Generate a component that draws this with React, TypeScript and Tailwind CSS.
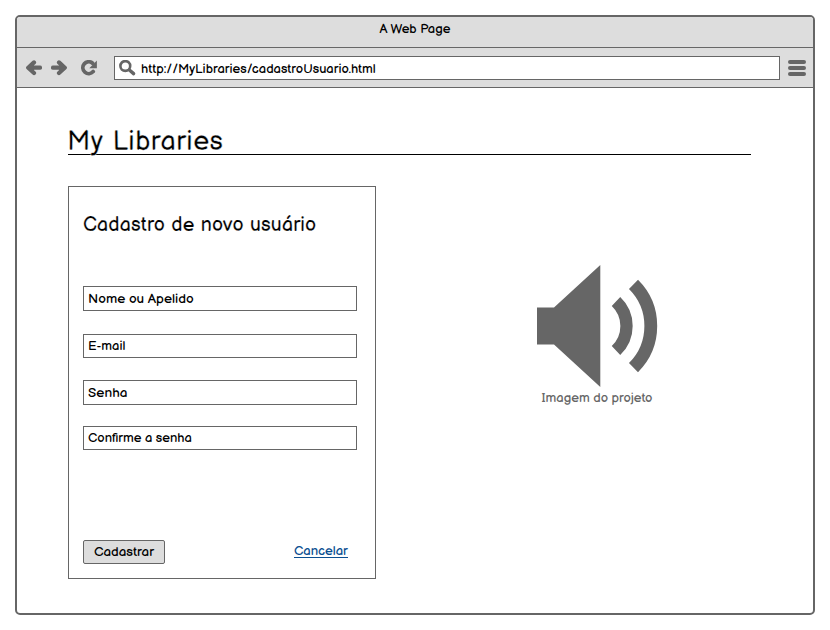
const fields = [
  { label: "Nome ou Apelido", box: "h-[25px] mb-[23px]", text: "text-[13.6px]" },
  { label: "E-mail", box: "h-6 mb-[22px]", text: "text-[13px]" },
  { label: "Senha", box: "h-[25px] mb-[21px]", text: "text-[13.6px] tracking-[0.1px]" },
  { label: "Confirme a senha", box: "h-6", text: "text-[13px]" },
];

function Speaker() {
  return (
    <svg width="122" height="124" viewBox="537 264 122 124" className="block" fill="#666666">
      <path d="M537 307.4h17L600.3 265v122L554 344.5h-17z" />
      <g fill="none" stroke="#666666">
        <path d="M616 301.5A33.8 33.8 0 0 1 616 350.5" strokeWidth="12.3" />
        <path d="M633.5 284.4A58.7 58.7 0 0 1 633.5 367.6" strokeWidth="12.8" />
      </g>
    </svg>
  );
}

function Toolbar() {
  return (
    <div className="flex h-[41px] items-center border-y border-[#666666] pl-[9px] pr-[7px]">
      <svg width="16" height="16" viewBox="0 0 16 16" className="shrink-0" fill="none" stroke="#666666" strokeWidth="4.2" strokeLinecap="round" strokeLinejoin="round">
        <path d="M8 2.4L2.2 7.7L8 13M3 7.7H14M6 5.5V10" />
      </svg>
      <svg width="16" height="16" viewBox="0 0 16 16" className="ml-[9px] shrink-0" fill="none" stroke="#666666" strokeWidth="4.2" strokeLinecap="round" strokeLinejoin="round">
        <path d="M8 2.4L13.8 7.7L8 13M13 7.7H2M10 5.5V10" />
      </svg>
      <svg width="17" height="16" viewBox="-0.5 0 17 16" className="ml-[13px] mr-px shrink-0">
        <path d="M12.7 11.6A5.9 5.9 0 1 1 12.1 3.2" fill="none" stroke="#666666" strokeWidth="3.8" strokeLinecap="round" />
        <path d="M16.4 .6v7.6H8.8z" fill="#666666" />
      </svg>
      <div className="ml-4 flex h-6 w-[666px] shrink-0 items-center border border-[#666666] bg-white pl-1">
        <svg width="17" height="16" viewBox="0 0 17 16" className="shrink-0" fill="none" stroke="#666666" strokeLinecap="round">
          <circle cx="6.3" cy="6" r="4.9" strokeWidth="2.6" />
          <path d="M10.4 10L14.6 13.6" strokeWidth="3.4" />
        </svg>
        <span className="ml-[5px] pt-[2px] text-[13px] leading-5">http://MyLibraries/cadastroUsuario.html</span>
      </div>
      <div className="ml-2 flex w-[18px] shrink-0 flex-col gap-[2px]">
        <span className="h-1 rounded-full bg-[#666666]" />
        <span className="h-1 rounded-full bg-[#666666]" />
        <span className="h-1 rounded-full bg-[#666666]" />
      </div>
    </div>
  );
}

export default function App() {
  return (
    <div className="h-[630px] w-[830px] bg-white p-[15px] font-['Balsamiq_Sans','Lato',sans-serif] text-black">
      <div className="h-[600px] w-[800px] overflow-hidden rounded-[5px] border-2 border-[#666666] bg-white">
        <div className="bg-[#dddddd]">
          <div className="h-[30px] text-center text-[13px] leading-[25px]">A Web Page</div>
          <Toolbar />
        </div>
        <div className="pl-[51px] pt-[38px]">
          <h1 className="h-[29px] w-[683px] border-b border-black pt-1 -indent-px text-[27px] leading-[25px] tracking-[0.45px] [word-spacing:3px] [-webkit-text-stroke:0.4px_white]">My Libraries</h1>
          <div className="mt-[31px] flex">
            <form className="h-[393px] w-[308px] border border-[#666666] pl-[14px]">
              <h2 className="mb-[48px] mt-[26px] text-[19.6px] leading-[25px] tracking-[0.15px] [word-spacing:0.8px] [-webkit-text-stroke:0.2px_white]">Cadastro de novo usuário</h2>
              {fields.map((f) => (
                <div key={f.label} className={`flex w-[274px] items-center border border-[#666666] pl-1 pt-[2px] ${f.box} ${f.text}`}>
                  {f.label}
                </div>
              ))}
              <div className="mt-[90px] flex items-start">
                <button type="button" className="h-6 w-[82px] rounded-[2px] border border-[#666666] bg-[#dddddd] text-[13.4px] leading-[22px]">
                  Cadastrar
                </button>
                <a className="ml-[129px] border-b border-[#0b4f91] pt-[5px] text-[13.1px] leading-[12px] text-[#0b4f91]">Cancelar</a>
              </div>
            </form>
            <figure className="ml-[161px] mt-[78px] w-[122px]">
              <Speaker />
              <figcaption className="-ml-[1px] w-[122px] text-center text-[13px] leading-[21px] text-[#666666]">Imagem do projeto</figcaption>
            </figure>
          </div>
        </div>
      </div>
    </div>
  );
}
